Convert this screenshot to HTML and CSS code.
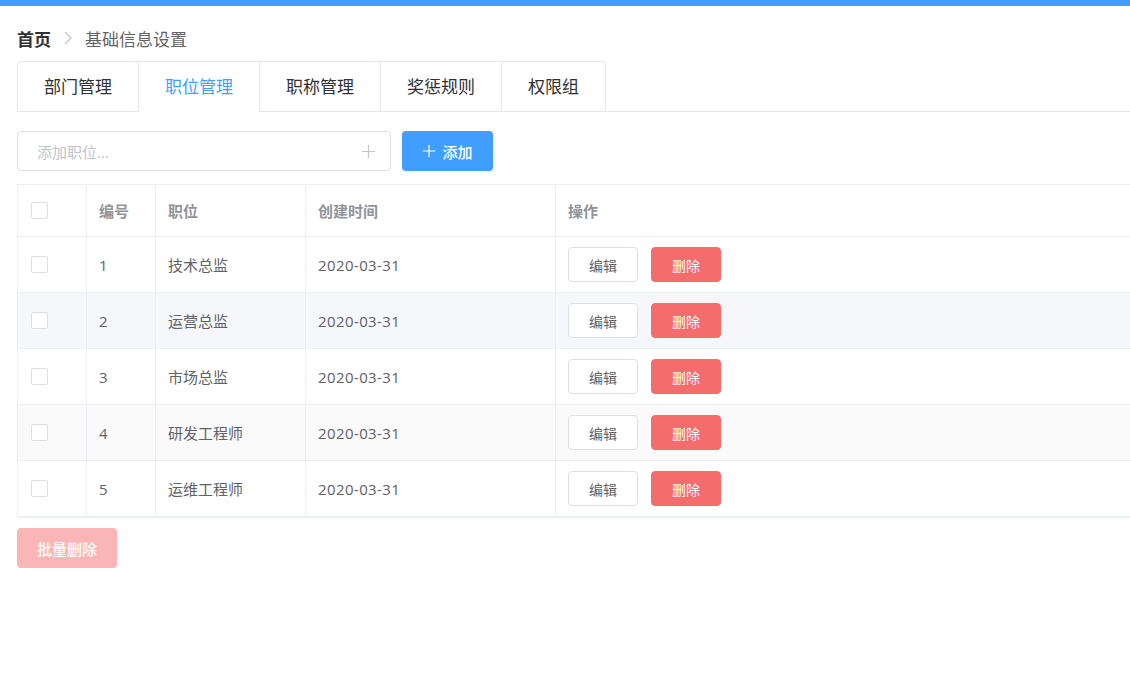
FILE: index.html
```html
<!DOCTYPE html>
<html lang="zh">
<head>
<meta charset="utf-8">
<title>基础信息设置</title>
<link rel="stylesheet" href="styles.css">
</head>
<body>
<div class="topbar"></div>
<div class="page">
  <div class="breadcrumb">
    <span class="crumb-home">首页</span>
    <svg class="crumb-sep" viewBox="0 0 10 16" width="10" height="16"><path d="M2 2 L8 8 L2 14" fill="none" stroke="#C0C4CC" stroke-width="1.3"/></svg>
    <span class="crumb-cur">基础信息设置</span>
  </div>

  <div class="tabs-header">
    <div class="tabs-nav">
      <div class="tab">部门管理</div>
      <div class="tab active">职位管理</div>
      <div class="tab">职称管理</div>
      <div class="tab">奖惩规则</div>
      <div class="tab">权限组</div>
    </div>
  </div>

  <div class="toolbar">
    <div class="input">
      <span class="placeholder">添加职位...</span>
      <svg class="input-plus" viewBox="0 0 16 16" width="15" height="15"><path d="M8 1 V15 M1 8 H15" stroke="#C0C4CC" stroke-width="1.3"/></svg>
    </div>
    <button class="btn btn-primary">
      <svg viewBox="0 0 16 16" width="14" height="14"><path d="M8 1 V15 M1 8 H15" stroke="#fff" stroke-width="1.4"/></svg>
      <span>添加</span>
    </button>
  </div>

  <div class="table">
    <div class="row head">
      <div class="cell c-check"><span class="checkbox"></span></div>
      <div class="cell c-id">编号</div>
      <div class="cell c-name">职位</div>
      <div class="cell c-date">创建时间</div>
      <div class="cell c-op">操作</div>
    </div>
    <div class="row">
      <div class="cell c-check"><span class="checkbox"></span></div>
      <div class="cell c-id">1</div>
      <div class="cell c-name">技术总监</div>
      <div class="cell c-date">2020-03-31</div>
      <div class="cell c-op"><button class="btn-sm btn-edit">编辑</button><button class="btn-sm btn-del">删除</button></div>
    </div>
    <div class="row hover">
      <div class="cell c-check"><span class="checkbox"></span></div>
      <div class="cell c-id">2</div>
      <div class="cell c-name">运营总监</div>
      <div class="cell c-date">2020-03-31</div>
      <div class="cell c-op"><button class="btn-sm btn-edit">编辑</button><button class="btn-sm btn-del">删除</button></div>
    </div>
    <div class="row">
      <div class="cell c-check"><span class="checkbox"></span></div>
      <div class="cell c-id">3</div>
      <div class="cell c-name">市场总监</div>
      <div class="cell c-date">2020-03-31</div>
      <div class="cell c-op"><button class="btn-sm btn-edit">编辑</button><button class="btn-sm btn-del">删除</button></div>
    </div>
    <div class="row stripe">
      <div class="cell c-check"><span class="checkbox"></span></div>
      <div class="cell c-id">4</div>
      <div class="cell c-name">研发工程师</div>
      <div class="cell c-date">2020-03-31</div>
      <div class="cell c-op"><button class="btn-sm btn-edit">编辑</button><button class="btn-sm btn-del">删除</button></div>
    </div>
    <div class="row last">
      <div class="cell c-check"><span class="checkbox"></span></div>
      <div class="cell c-id">5</div>
      <div class="cell c-name">运维工程师</div>
      <div class="cell c-date">2020-03-31</div>
      <div class="cell c-op"><button class="btn-sm btn-edit">编辑</button><button class="btn-sm btn-del">删除</button></div>
    </div>
  </div>

  <button class="btn btn-batch">批量删除</button>
</div>
</body>
</html>
```

FILE: styles.css
```css
* { box-sizing: border-box; }
html, body { margin: 0; padding: 0; background: #fff; }
body {
  font-family: "Open Sans", "Noto Sans CJK SC", "Noto Sans", sans-serif;
  color: #606266;
}
.topbar { height: 6px; background: #409EFF; }
.page { padding-left: 17px; }

.breadcrumb {
  display: flex;
  align-items: center;
  height: 24px;
  margin-top: 20px;
  margin-bottom: 11px;
  font-size: 17px;
}
.crumb-home { font-weight: 700; color: #303133; }
.crumb-sep { margin: 0 12px 0 12px; }
.crumb-cur { color: #606266; }

.tabs-header {
  border-bottom: 1px solid #E4E7ED;
  display: flex;
}
.tabs-nav {
  display: flex;
  border: 1px solid #E4E7ED;
  border-bottom: none;
  border-radius: 4px 4px 0 0;
}
.tab {
  height: 50px;
  line-height: 50px;
  padding: 0 26px;
  font-size: 17px;
  color: #303133;
  border-left: 1px solid #E4E7ED;
  margin-bottom: -1px;
  border-bottom: 1px solid transparent;
}
.tab:first-child { border-left: none; }
.tab.active { color: #409EFF; border-bottom-color: #fff; background: #fff; }

.toolbar {
  display: flex;
  align-items: center;
  margin-top: 19px;
  gap: 11px;
}
.input {
  width: 374px;
  height: 40px;
  border: 1px solid #DCDFE6;
  border-radius: 4px;
  display: flex;
  align-items: center;
  justify-content: space-between;
  padding: 0 14px 0 19px;
}
.placeholder { color: #C0C4CC; font-size: 15px; }
.btn {
  border: none;
  border-radius: 4px;
  font-family: inherit;
  font-size: 15px;
  cursor: pointer;
  display: inline-flex;
  align-items: center;
  justify-content: center;
  height: 40px;
}
.btn-primary {
  width: 91px;
  background: #409EFF;
  color: #fff;
  gap: 6px;
  font-weight: 500;
}

.table {
  margin-top: 13px;
  border-top: 1px solid #EBEEF5;
  border-left: 1px solid #EBEEF5;
  border-bottom: 1px solid #EBEEF5;
  font-size: 15px;
}
.row {
  display: flex;
  height: 56px;
  border-bottom: 1px solid #EBEEF5;
  background: #fff;
}
.row.head { height: 52px; }
.row.hover { background: #F5F7FA; }
.row.stripe { background: #FAFAFA; }
.cell {
  display: flex;
  align-items: center;
  padding: 0 12px;
  border-right: 1px solid #EBEEF5;
  color: #606266;
}
.head .cell { color: #909399; font-weight: 700; }
.c-check { width: 69px; padding-left: 13px; }
.c-id { width: 69px; }
.c-name { width: 150px; }
.c-date { width: 250px; letter-spacing: 0.4px; }
.head .c-date { letter-spacing: 0; }
.c-op { flex: 1; border-right: none; gap: 13px; }
.checkbox {
  display: inline-block;
  width: 17px;
  height: 17px;
  border: 1px solid #DCDFE6;
  border-radius: 2px;
  background: #fff;
}
.btn-sm {
  width: 70px;
  height: 35px;
  border-radius: 4px;
  font-family: inherit;
  font-size: 14px;
  cursor: pointer;
}
.btn-edit { background: #fff; border: 1px solid #DCDFE6; color: #606266; }
.btn-del { background: #F56C6C; border: 1px solid #F56C6C; color: #fff; }

.btn-batch {
  margin-top: 10px;
  width: 100px;
  background: #FAB6B6;
  color: #fff;
  font-weight: 500;
}
```
